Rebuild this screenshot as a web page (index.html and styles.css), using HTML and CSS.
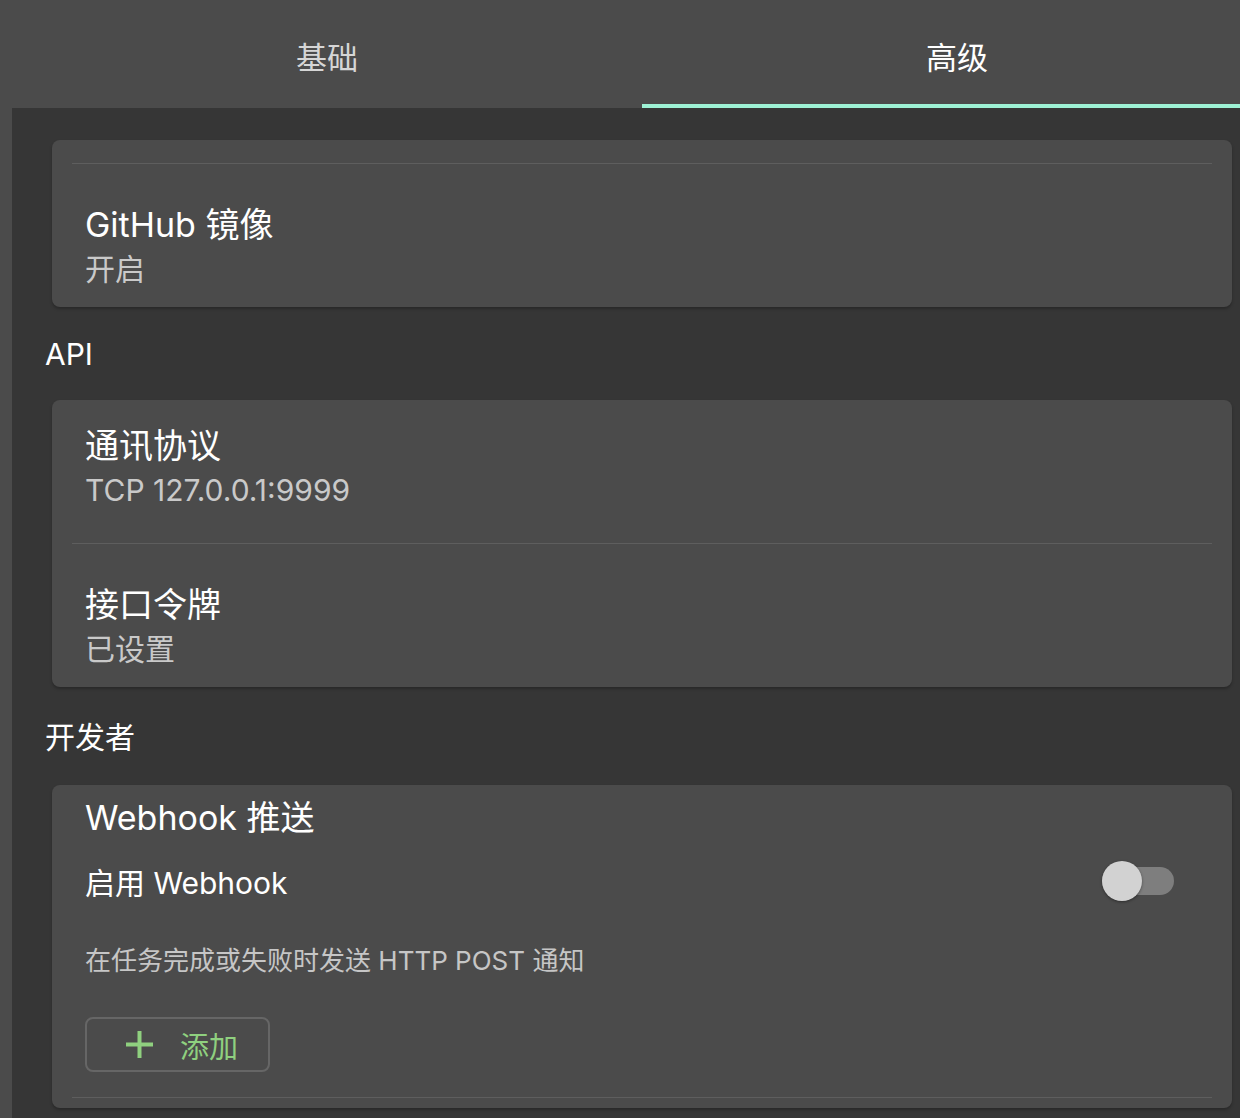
FILE: index.html
```html
<!DOCTYPE html>
<html lang="zh-CN">
<head>
<meta charset="utf-8">
<title>设置</title>
<link rel="stylesheet" href="styles.css">
</head>
<body>
<div class="app">
  <div class="tabs">
    <div class="tab">基础</div>
    <div class="tab active">高级</div>
  </div>
  <div class="content">
    <div class="card card-first">
      <div class="divider"></div>
      <div class="row">
        <div class="row-title">GitHub 镜像</div>
        <div class="row-sub">开启</div>
      </div>
    </div>

    <div class="section-title">API</div>
    <div class="card">
      <div class="row">
        <div class="row-title">通讯协议</div>
        <div class="row-sub">TCP 127.0.0.1:9999</div>
      </div>
      <div class="divider"></div>
      <div class="row">
        <div class="row-title">接口令牌</div>
        <div class="row-sub">已设置</div>
      </div>
    </div>

    <div class="section-title section-dev">开发者</div>
    <div class="card card-webhook">
      <div class="wh-title">Webhook 推送</div>
      <div class="wh-toggle-row">
        <span class="wh-label">启用 Webhook</span>
        <span class="switch"><span class="switch-track"></span><span class="switch-knob"></span></span>
      </div>
      <div class="wh-desc">在任务完成或失败时发送 HTTP POST 通知</div>
      <button class="add-btn" type="button">
        <svg class="plus" width="29" height="29" viewBox="0 0 29 29"><path d="M14.5 1v27M1 14.5h27" stroke="#8fd07f" stroke-width="4" fill="none"/></svg>
        <span>添加</span>
      </button>
      <div class="divider divider-wh"></div>
    </div>
  </div>
</div>
</body>
</html>
```

FILE: styles.css
```css
html, body {
  margin: 0;
  padding: 0;
}
body {
  background: #4b4b4b;
  width: 1240px;
  height: 1118px;
  overflow: hidden;
  font-family: Inter, "Noto Sans CJK SC", sans-serif;
  color: #ffffff;
}
.app {
  margin-left: 12px;
  width: 1260px;
}
.tabs {
  display: flex;
  height: 108px;
  background: #4b4b4b;
}
.tab {
  flex: 1;
  box-sizing: border-box;
  display: flex;
  align-items: center;
  justify-content: center;
  padding-top: 6px;
  padding-bottom: 4px;
  font-size: 31px;
  color: #d6d6d6;
}
.tab.active {
  color: #ffffff;
  border-bottom: 4px solid #9ef2d5;
  padding-bottom: 0;
}
.content {
  background: #363636;
  padding: 32px 33px 10px;
  min-height: 1000px;
}
.card {
  margin: 0 7px;
  background: #4b4b4b;
  border-radius: 8px;
  box-shadow: 0 2px 3px rgba(0, 0, 0, 0.25);
}
.card-first {
  padding-top: 23px;
}
.divider {
  height: 1px;
  background: #5e5e5e;
  margin: 0 20px;
}
.row {
  padding: 24px 33px 16px;
}
.row + .divider {
  margin-top: 15px;
}
.divider + .row {
  margin-top: 15px;
}
.row-title {
  font-size: 34px;
  line-height: 44px;
  color: #ffffff;
}
.row-sub {
  font-size: 30px;
  line-height: 44px;
  color: #c9c9c9;
}
.section-title {
  font-size: 30px;
  line-height: 40px;
  margin: 27px 0 26px;
  color: #ffffff;
}
.section-dev {
  margin: 30px 0 28px;
}
.card-webhook {
  padding: 11px 0 10px;
}
.wh-title {
  padding: 0 33px;
  font-size: 34px;
  line-height: 44px;
}
.wh-toggle-row {
  margin-top: 17px;
  height: 48px;
  padding: 0 58px 0 33px;
  display: flex;
  align-items: center;
  justify-content: space-between;
}
.wh-label {
  font-size: 30px;
  color: #ffffff;
}
.switch {
  position: relative;
  width: 72px;
  height: 40px;
  display: inline-block;
}
.switch-track {
  position: absolute;
  left: 0;
  right: 0;
  top: 6px;
  height: 28px;
  border-radius: 14px;
  background: #7e7e7e;
}
.switch-knob {
  position: absolute;
  left: 0;
  top: 0;
  width: 40px;
  height: 40px;
  border-radius: 50%;
  background: #d2d2d2;
  box-shadow: 0 1px 3px rgba(0, 0, 0, 0.4);
}
.wh-desc {
  margin-top: 38px;
  padding: 0 33px;
  font-size: 26px;
  line-height: 36px;
  color: #c6c6c6;
}
.add-btn {
  margin: 38px 0 0 33px;
  box-sizing: border-box;
  width: 185px;
  height: 55px;
  display: flex;
  align-items: center;
  padding: 0 0 0 38px;
  gap: 26px;
  background: transparent;
  border: 2px solid #666666;
  border-radius: 8px;
  font-family: Inter, "Noto Sans CJK SC", sans-serif;
  font-size: 29px;
  color: #8fd07f;
}
.plus {
  display: block;
}
.divider-wh {
  margin-top: 25px;
}
```
